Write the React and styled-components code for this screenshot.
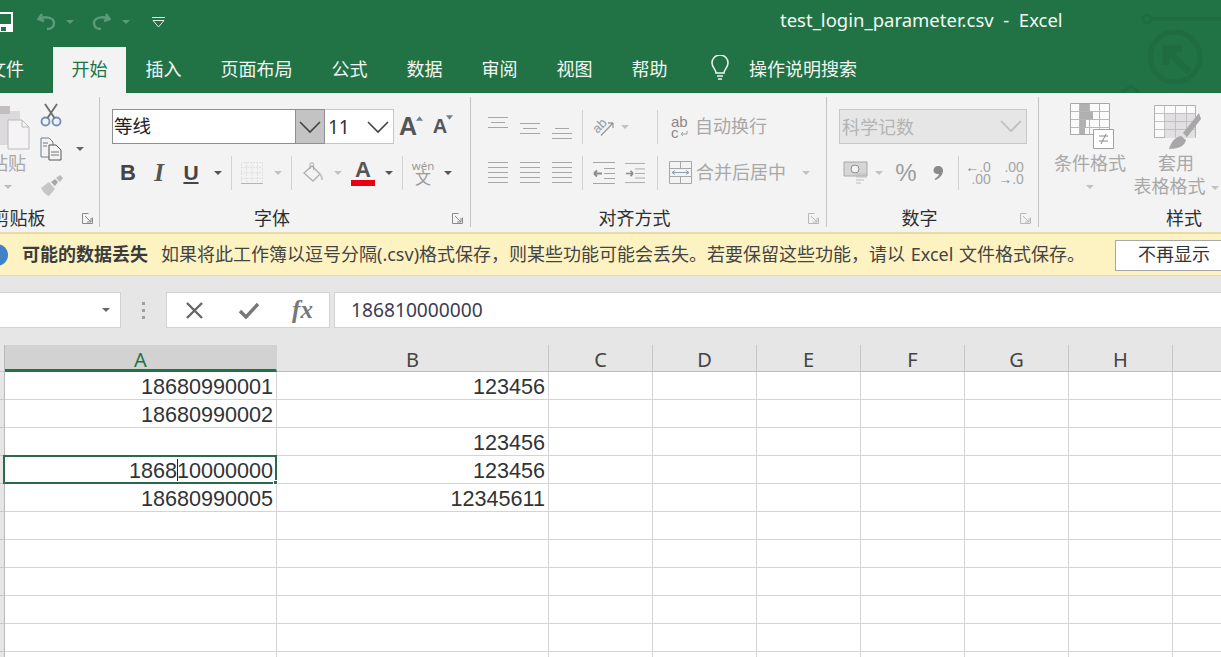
import React from "react";
import styled, { createGlobalStyle } from "styled-components";

const CJK = `"Noto Sans", "Noto Sans CJK SC", sans-serif`;
const Global = createGlobalStyle`
  html, body { margin: 0; padding: 0; overflow: hidden; background: #fff; }
  body { font-family: ${CJK}; }
`;
const Page = styled.div`
  position: relative; width: 1221px; height: 657px; overflow: hidden; display: flex; flex-direction: column;
`;
const TitleBar = styled.div`
  height: 47px; flex: none; background: #217346; display: flex; align-items: center; box-sizing: border-box;
`;
const QuickAccess = styled.div`
  display: flex; align-items: center; width: 164px; flex: none; height: 40px; margin-left: -4px;
`;
const Title = styled.div`
  margin-left: 620px; margin-top: -8px; color: #f4f8f5; font-size: 18.5px; white-space: pre;
`;
const Watermark = styled.svg`
  position: absolute; left: 1120px; top: 0; width: 101px; height: 93px;
`;
const TabBar = styled.div`
  height: 46px; flex: none; background: #217346; display: flex; margin-left: -12px;
`;
const Tab = styled.div`
  padding: 0 ${p => p.$pad ?? 19.5}px 4px; margin-right: ${p => p.$mr ?? 0}px; display: flex; align-items: center;
  font-size: 18px;
  color: ${p => p.$active ? "#217346" : "#f2f6f3"};
  background: ${p => p.$active ? "#f3f3f3" : "transparent"};
`;
const Bulb = styled.svg`
  margin: 0 -3px 0 1px;
`;
const Ribbon = styled.div`
  height: 139px; flex: none; background: #f3f3f3; display: flex; overflow: hidden;
`;
const Group = styled.div`
  position: relative; flex: none; box-sizing: border-box; width: ${p => p.$w}px; margin-left: ${p => p.$ml ?? 0}px;
  display: flex; flex-direction: column;
`;
const GroupBody = styled.div`
  height: 112px; box-sizing: border-box; padding: ${p => p.$pt ?? 16}px 0 0 ${p => p.$pl}px;
  display: flex; flex-direction: ${p => p.$row ? "row" : "column"}; gap: ${p => p.$row ? 0 : 11}px;
`;
const GroupLabel = styled.div`
  height: 27px; line-height: 26px; text-align: center; padding-right: ${p => p.$pr ?? 26}px; font-size: 18px; color: #2e2e2e;
`;
const Launcher = styled.svg`
  position: absolute; right: ${p => p.$r ?? 7}px; bottom: 8px; width: 11px; height: 11px;
`;
const GroupSep = styled.div`
  flex: none; width: 1px; margin: 4px 0 5px; background: #c4c4c4;
`;
const ToolRow = styled.div`
  display: flex; align-items: center; height: 35px;
`;
const Tool = styled.div`
  flex: none; width: ${p => p.$w}px; margin-left: ${p => p.$ml ?? 0}px; display: flex; align-items: center; justify-content: center;
  color: ${p => p.$c ?? "#444"}; height: 35px;
`;
const Caret = styled.span`
  display: inline-block; width: 0; height: 0; border-left: 4px solid transparent; border-right: 4px solid transparent;
  border-top: 4px solid ${p => p.$c ?? "#555"}; flex: none;
`;
const MiniSep = styled.div`
  flex: none; width: 1px; height: ${p => p.$h ?? 34}px; background: #d2d2d2; margin-left: ${p => p.$ml ?? 0}px;
`;
const FontSelect = styled.div`
  width: 183px; height: 35px; box-sizing: border-box; background: #fff; border: 1px solid #8f8f8f; border-right: 0;
  font-size: 18.5px; line-height: 32px; padding-left: 1px; color: #222;
`;
const SelectButton = styled.div`
  width: 30px; height: 35px; box-sizing: border-box; background: #c3c3c3; border: 1px solid #8f8f8f; display: flex; align-items: center; justify-content: center;
`;
const SizeSelect = styled.div`
  width: 69px; height: 35px; box-sizing: border-box; background: #fff; border: 1px solid #c6c6c6; border-left: 0; display: flex;
  align-items: center; justify-content: space-between; padding: 0 3px 0 3px; font-size: 19px; color: #333;
`;
const Glyph = styled.span`
  font-family: ${p => p.$serif ? `"Liberation Serif", serif` : `"Liberation Sans", sans-serif`};
  font-weight: 700; font-size: ${p => p.$s ?? 21}px;
  font-style: ${p => p.$i ? "italic" : "normal"}; color: ${p => p.$c ?? "#444"};
  text-decoration: ${p => p.$u ? "underline" : "none"}; text-underline-offset: 2px;
`;
const SizeMark = styled.svg`
  margin: ${p => p.$top}px 0 0 -1px; flex: none;
`;
const FontColor = styled.div`
  display: flex; flex-direction: column; align-items: center; width: 24px;
  font: 700 22px/22px "Liberation Sans", sans-serif; color: #555;
`;
const RedBar = styled.div`
  width: 24px; height: 6px; background: #e60012; margin-top: -1px;
`;
const Phonetic = styled.div`
  display: flex; flex-direction: column; align-items: center; color: #9a9a9a; font-size: 11.5px; line-height: 11px;
  & b { font-weight: 400; font-size: 16px; line-height: 15px; }
`;
const DimText = styled.div`
  flex: none; font-size: 18px; color: #a8a8a8; margin-left: ${p => p.$ml ?? 0}px; margin-top: -3px; white-space: nowrap;
`;
const NumberSelect = styled.div`
  width: 188px; height: 35px; box-sizing: border-box; background: #e6e6e6; border: 1px solid #c8c8c8; display: flex;
  align-items: center; justify-content: space-between; padding: 0 3px 2px 2px; font-size: 18px; color: #b4b4b4;
`;
const Percent = styled.span`
  font: 400 24px "Liberation Sans", sans-serif; color: #9c9c9c;
`;
const DecimalBox = styled.div`
  display: grid; justify-items: end; font: 400 14px/12px "Liberation Sans", sans-serif; color: #a4a4a4;
  & b { color: #8a8a8a; }
`;
const BigCol = styled.div`
  flex: none; width: ${p => p.$w}px; display: flex; flex-direction: column; align-items: center; color: #a8a8a8; font-size: 18px; line-height: 23px; white-space: nowrap;
`;
const BigIcon = styled.svg`
  height: 47px; width: 50px; margin-bottom: 2px; flex: none;
`;
const CaretLine = styled.div`
  height: 23px; display: flex; align-items: center;
`;
const InlineCaret = styled(Caret)`
  margin-left: 5px; vertical-align: middle;
`;
const PasteCol = styled.div`
  width: 44px; flex: none; display: flex; flex-direction: column; align-items: center; font-size: 18px; color: #a8a8a8; line-height: 23px; white-space: nowrap;
`;
const ClipCol = styled.div`
  margin-left: 10px; display: flex; flex-direction: column; gap: 10px;
`;
const ClipRow = styled.div`
  display: flex; align-items: center; gap: 11px;
`;
const Notice = styled.div`
  height: 44px; flex: none; box-sizing: border-box; background: #fdf3c2; border-top: 2px solid #e6dca8; border-bottom: 1px solid #e6dca8;
  display: flex; align-items: center; font-size: 18px; color: #444; white-space: pre; margin-left: -14px; padding-bottom: 3px; word-spacing: 1px;
`;
const NoticeDot = styled.div`
  width: 22px; height: 22px; border-radius: 50%; background: #3f82c8; flex: none; margin: 3px 14px 0 0;
`;
const NoticeHead = styled.b`
  font-weight: 700; margin-right: 13px; color: #3c3c3c;
`;
const NoticeButton = styled.div`
  position: absolute; left: 1115px; top: 240px; width: 130px; height: 31px; box-sizing: border-box; background: #fff; border: 1px solid #a8a8a8;
  font-size: 18px; line-height: 27px; padding-left: 22px; color: #333;
`;
const FormulaBar = styled.div`
  height: 69px; flex: none; box-sizing: border-box; background: #e6e6e6; padding: 16px 0 17px; display: flex; align-items: stretch;
`;
const NameBox = styled.div`
  width: 121px; box-sizing: border-box; background: #fff; border: 1px solid #d2d2d2; border-left: 0; display: flex; align-items: center; justify-content: flex-end; padding-right: 10px;
`;
const Dots = styled.div`
  width: 45px; display: flex; flex-direction: column; align-items: center; justify-content: center; gap: 4px;
  & i { width: 3px; height: 3px; background: #a0a0a0; display: block; }
`;
const FormulaButtons = styled.div`
  width: 164px; box-sizing: border-box; background: #fff; border: 1px solid #d2d2d2; display: flex; align-items: center;
`;
const FxLabel = styled.span`
  font: italic 700 25px "Liberation Serif", serif; color: #777;
`;
const FormulaInput = styled.div`
  flex: 1; margin-left: 4px; box-sizing: border-box; background: #fff; border: 1px solid #d2d2d2; border-right: 0; padding-left: 16px; font-size: 19.2px; line-height: 33px; color: #3c3c50;
`;
const Sheet = styled.div`
  flex: none; display: grid; grid-template-columns: 5px 272px 272px repeat(6, 104px) 60px; grid-auto-rows: 28px;
  grid-template-rows: 27px; font-family: "Liberation Sans", sans-serif;
`;
const ColHead = styled.div`
  box-sizing: border-box; background: ${p => p.$sel ? "#d2d2d2" : "#e6e6e6"};
  border-right: 1px solid ${p => p.$sel ? "#d2d2d2" : "#c6c6c6"};
  border-bottom: ${p => p.$sel ? "3px solid #217346" : "1px solid #bdbdbd"};
  color: ${p => p.$sel ? "#217346" : "#444"};
  font: 400 20px/29px "Noto Sans", sans-serif; text-align: center;
`;
const RowHead = styled.div`
  box-sizing: border-box; background: #e6e6e6; border-right: 1px solid #b9b9b9; border-bottom: 1px solid #c6c6c6;
`;
const Cell = styled.div`
  position: relative; box-sizing: border-box; background: #fff; border-right: 1px solid #d4d4d4; border-bottom: 1px solid #d4d4d4;
  text-align: right; padding-right: 3px; font-size: 21.6px; line-height: 30px; color: #333;
`;
const SelectedFrame = styled.div`
  position: absolute; z-index: 1; left: -2px; top: -1px; right: -1px; bottom: -1px; border: 2px solid #2a6a4b; pointer-events: none;
`;
const FillHandle = styled.div`
  position: absolute; right: -3px; bottom: -3px; width: 5px; height: 5px; background: #217346; border: 1px solid #fff; box-sizing: border-box;
`;
const TextCaret = styled.span`
  display: inline-block; width: 1px; height: 22px; background: #222; vertical-align: -3px; margin: 0 -1px 0 0;
`;

const Chevron = ({ c = "#444" }) => (
  <svg width="24" height="14" viewBox="0 0 24 14"><path d="M2 2l10 10L22 2" fill="none" stroke={c} strokeWidth="1.6" /></svg>
);
const Lines = ({ ys, x1 = 0, x2 = 20, c = "#a6a6a6", w = 20, h = 24 }) => (
  <svg width={w} height={h} viewBox={`0 0 ${w} ${h}`}>
    {ys.map((y, i) => {
      const [a, b] = Array.isArray(x1) ? x1[i] : [x1, x2];
      return <path key={i} d={`M${a} ${y + 0.5}H${b}`} stroke={c} strokeWidth="1" />;
    })}
  </svg>
);
const IndentIcon = ({ right }) => (
  <svg width="22" height="24" viewBox="0 0 22 24">
    <path d="M0 1.5h22M11 7.5h11M11 12.5h11M11 17.5h11M0 22.5h22" stroke="#a6a6a6" />
    <path d={right ? "M1 12.5h8M9 12.5l-3-3M9 12.5l-3 3" : "M1 12.5h8M1 12.5l3-3M1 12.5l3 3"} stroke="#8c8c8c" strokeWidth="1.8" fill="none" />
  </svg>
);
const LauncherIcon = ({ c = "#8a8a8a", r }) => (
  <Launcher $r={r} viewBox="0 0 11 11"><path d="M.5.5h6M.5.5v10h10v-6M3 3l6 6M9 5v4H5" fill="none" stroke={c} /></Launcher>
);

export default function App() {
  const rows = [
    ["18680990001", "123456"],
    ["18680990002", ""],
    ["", "123456"],
    ["SEL", "123456"],
    ["18680990005", "12345611"],
    ["", ""], ["", ""], ["", ""], ["", ""], ["", ""], ["", ""],
  ];
  return (
    <Page>
      <Global />
      <TitleBar>
        <QuickAccess>
          <svg width="18" height="20" viewBox="0 0 18 20" style={{ marginTop: -4, flex: "none" }}>
            <path d="M1 1h15v18H1z" fill="none" stroke="#fff" strokeWidth="2" />
            <path d="M1 12h15v7H1z" fill="#fff" />
            <path d="M5 15h5v4H5z" fill="#217346" />
          </svg>
          <svg width="20" height="20" viewBox="0 0 20 20" style={{ marginLeft: 23, marginTop: -4, flex: "none" }}>
            <path d="M5 2L1.5 7 7 9M2 7c5-3 15-2 15 4 0 4-3 6-7 6" fill="none" stroke="#5c9a7a" strokeWidth="2.4" />
          </svg>
          <Caret $c="#5c9a7a" style={{ marginLeft: 9, marginTop: -3 }} />
          <svg width="20" height="20" viewBox="0 0 20 20" style={{ marginLeft: 17, marginTop: -4, flex: "none" }}>
            <path d="M15 2l3.5 5L13 9M18 7c-5-3-15-2-15 4 0 4 3 6 7 6" fill="none" stroke="#5c9a7a" strokeWidth="2.4" />
          </svg>
          <Caret $c="#5c9a7a" style={{ marginLeft: 11, marginTop: -3 }} />
          <svg width="13" height="11" viewBox="0 0 13 11" style={{ marginLeft: 22, marginTop: -3, flex: "none" }}>
            <path d="M0 .5h13M1 3.5h11L6.5 10z" fill="none" stroke="#dfeae4" strokeWidth="1" />
          </svg>
        </QuickAccess>
        <Title>{"test_login_parameter.csv  -  Excel"}</Title>
      </TitleBar>
      <Watermark viewBox="0 0 101 93">
        <g fill="none" stroke="#1e6c40" strokeWidth="5">
          <circle cx="55" cy="57" r="25" />
          <path d="M30 19h71" strokeWidth="4" />
          <circle cx="27" cy="19" r="4" strokeWidth="3" />
          <path d="M47 50l22 22M46 65V49h16" strokeWidth="7" />
          <path d="M2 92l9-6 8 6" strokeWidth="3" />
        </g>
      </Watermark>
      <TabBar>
        <Tab $pad={0} $mr={29}>文件</Tab>
        <Tab $active $pad={18.5}>开始</Tab>
        <Tab>插入</Tab>
        <Tab>页面布局</Tab>
        <Tab>公式</Tab>
        <Tab>数据</Tab>
        <Tab>审阅</Tab>
        <Tab>视图</Tab>
        <Tab>帮助</Tab>
        <Tab $pad={22}>
          <Bulb width="20" height="26" viewBox="0 0 20 26">
            <path d="M6 18c0-4-4-5-4-10a8 8 0 0 1 16 0c0 5-4 6-4 10zM7 21h6M8 24h4" fill="none" stroke="#f2f6f3" strokeWidth="1.5" />
          </Bulb>
        </Tab>
        <Tab $pad={0}>操作说明搜索</Tab>
      </TabBar>
      <Ribbon>
        <Group $w={135} $ml={-36}>
          <GroupBody $row $pt={10} $pl={22}>
            <PasteCol>
              <svg width="44" height="47" viewBox="0 0 44 47" style={{ flex: "none", marginBottom: 2 }}>
                <path d="M0 8h34v34H0z" fill="#dcdadc" />
                <path d="M6 3h18v8H6z" fill="#c2bec2" />
                <path d="M22 17h14l7 7v22H22z" fill="#f5f3f5" stroke="#bcbcbc" />
                <path d="M36 17v7h7" fill="none" stroke="#bcbcbc" />
              </svg>
              <span>粘贴</span>
              <CaretLine><Caret $c="#bdbdbd" /></CaretLine>
            </PasteCol>
            <ClipCol>
              <svg width="22" height="24" viewBox="0 0 22 24">
                <circle cx="5.5" cy="18.5" r="4" fill="none" stroke="#6d8fb5" strokeWidth="1.8" />
                <circle cx="16.5" cy="18.5" r="4" fill="none" stroke="#6d8fb5" strokeWidth="1.8" />
                <path d="M7.5 15L17 1M14.5 15L5 1" stroke="#6b6b6b" strokeWidth="1.8" />
              </svg>
              <ClipRow>
                <svg width="22" height="24" viewBox="0 0 22 24">
                  <path d="M1 1h8l4 4v15H1z" fill="#f3f3f3" stroke="#6d7f92" />
                  <path d="M9 8h7l5 5v10H9z" fill="#f3f3f3" stroke="#555" />
                  <path d="M11 15h8M11 18h8M3 6h5M3 9h4" stroke="#777" />
                </svg>
                <Caret $c="#666" style={{ marginLeft: 3 }} />
              </ClipRow>
              <svg width="24" height="22" viewBox="0 0 24 22" style={{ marginTop: 3 }}>
                <path d="M1 14l8-6 6 7-6 7c-3-1-6-4-8-8z" fill="#c6c6c6" />
                <path d="M11 8l4-3 3 3-3 4z" fill="#a8a8a8" />
                <path d="M16 4l4-3 3 3-3 4z" fill="#bababa" />
              </svg>
            </ClipCol>
          </GroupBody>
          <GroupLabel>剪贴板</GroupLabel>
          <LauncherIcon r={6} />
        </Group>
        <GroupSep />
        <Group $w={370}>
          <GroupBody $pl={12}>
            <ToolRow>
              <FontSelect>等线</FontSelect>
              <SelectButton><Chevron /></SelectButton>
              <SizeSelect>11<Chevron /></SizeSelect>
              <Tool $w={34}>
                <Glyph $s={25} $c="#555">A</Glyph>
                <SizeMark $top={-17} width="7" height="5" viewBox="0 0 8 5"><path d="M4 0l4 5H0z" fill="#6f8090" /></SizeMark>
              </Tool>
              <Tool $w={30}>
                <Glyph $s={20} $c="#555">A</Glyph>
                <SizeMark $top={-19} width="7" height="5" viewBox="0 0 8 5"><path d="M0 0h8L4 5z" fill="#6f8090" /></SizeMark>
              </Tool>
            </ToolRow>
            <ToolRow>
              <Tool $w={32}><Glyph $s={22}>B</Glyph></Tool>
              <Tool $w={30}><Glyph $serif $s={25} $i $c="#555">I</Glyph></Tool>
              <Tool $w={34}><Glyph $s={21} $u>U</Glyph></Tool>
              <Tool $w={20}><Caret /></Tool>
              <MiniSep $ml={3} />
              <Tool $w={40}>
                <svg width="22" height="22" viewBox="0 0 22 22">
                  <path d="M.5.5h21v21H.5zM11 .5v21M.5 11h21M5.5.5v21M16.5.5v21M.5 5.5h21M.5 16.5h21" fill="none" stroke="#cfcfcf" strokeDasharray="1 2" />
                  <path d="M0 21.5h22" stroke="#b4b4b4" />
                </svg>
              </Tool>
              <Tool $w={12}><Caret $c="#c2c2c2" /></Tool>
              <MiniSep $ml={7} />
              <Tool $w={42}>
                <svg width="20" height="22" viewBox="0 0 20 22">
                  <path d="M1 11l8-7 8 8-7 7z" fill="#f3f3f3" stroke="#b0b0b0" strokeWidth="1.4" />
                  <path d="M7 7V2.5a1.8 1.8 0 0 1 3.6 0V8" fill="none" stroke="#a8a8a8" />
                  <path d="M17 12c2 2 2.2 4 2 6" fill="none" stroke="#c8c8c8" strokeWidth="2" />
                </svg>
              </Tool>
              <Tool $w={8}><Caret $c="#c2c2c2" /></Tool>
              <Tool $w={42}><FontColor>A<RedBar /></FontColor></Tool>
              <Tool $w={10}><Caret /></Tool>
              <MiniSep $ml={8} />
              <Tool $w={40}><Phonetic>wén<b>文</b></Phonetic></Tool>
              <Tool $w={10}><Caret /></Tool>
            </ToolRow>
          </GroupBody>
          <GroupLabel>字体</GroupLabel>
          <LauncherIcon />
        </Group>
        <GroupSep />
        <Group $w={355}>
          <GroupBody $pl={11}>
            <ToolRow>
              <Tool $w={32}><Lines ys={[2, 7, 12]} x1={[[0, 20], [3, 17], [0, 20]]} /></Tool>
              <Tool $w={32}><Lines ys={[8, 13, 18]} x1={[[0, 20], [3, 17], [0, 20]]} /></Tool>
              <Tool $w={32}><Lines ys={[13, 18, 23]} x1={[[3, 17], [0, 20], [0, 20]]} /></Tool>
              <MiniSep $ml={4} />
              <Tool $w={38}>
                <svg width="24" height="24" viewBox="0 0 24 24">
                  <text x="2" y="15" fontFamily="Liberation Sans" fontSize="13" fill="#9a9a9a" transform="rotate(-45 9.5 10.5)">ab</text>
                  <path d="M11 20.500L23 8M23 8h-5M23 8v5" fill="none" stroke="#9a9a9a" strokeWidth="1.3" />
                </svg>
              </Tool>
              <Tool $w={8}><Caret $c="#c2c2c2" /></Tool>
              <MiniSep $ml={28} />
              <Tool $w={30} $ml={7}>
                <svg width="20" height="24" viewBox="0 0 20 24">
                  <text x="1" y="12" fontFamily="Liberation Sans" fontSize="15" fill="#8a8a8a">ab</text>
                  <text x="1" y="23" fontFamily="Liberation Sans" fontSize="15" fill="#8a8a8a">c</text>
                  <path d="M17 16v3h-6M11 19l2-2M11 19l2 2" fill="none" stroke="#a0a0a0" />
                </svg>
              </Tool>
              <DimText>自动换行</DimText>
            </ToolRow>
            <ToolRow>
              <Tool $w={32}><Lines ys={[1, 6, 11, 16, 21]} /></Tool>
              <Tool $w={32}><Lines ys={[1, 6, 11, 16, 21]} /></Tool>
              <Tool $w={32}><Lines ys={[1, 6, 11, 16, 21]} /></Tool>
              <MiniSep $ml={4} />
              <Tool $w={42}><IndentIcon /></Tool>
              <Tool $w={20}><IndentIcon right /></Tool>
              <MiniSep $ml={12} />
              <Tool $w={30} $ml={7}>
                <svg width="23" height="23" viewBox="0 0 23 23">
                  <path d="M.5.5h22v22H.5zM.5 7.5h22M.5 15.5h22M11.500.5v7M11.500 15.5v7" fill="none" stroke="#a6a6a6" />
                  <path d="M3 11.5h17M3 11.5l3-2M3 11.5l3 2M20 11.5l-3-2M20 11.5l-3 2" fill="none" stroke="#8aa0b5" />
                </svg>
              </Tool>
              <DimText $ml={1}>合并后居中</DimText>
              <Caret $c="#c2c2c2" style={{ marginLeft: 16 }} />
            </ToolRow>
          </GroupBody>
          <GroupLabel $pr={28}>对齐方式</GroupLabel>
          <LauncherIcon c="#b8b8b8" />
        </Group>
        <GroupSep />
        <Group $w={211}>
          <GroupBody $pl={12}>
            <ToolRow>
              <NumberSelect>科学记数<Chevron c="#bdbdbd" /></NumberSelect>
            </ToolRow>
            <ToolRow>
              <Tool $w={32}>
                <svg width="25" height="25" viewBox="0 0 25 25">
                  <path d="M1 2h23v14H1z" fill="#d6d6d6" stroke="#a8a8a8" />
                  <circle cx="12" cy="9" r="4" fill="#f3f3f3" stroke="#8e8e8e" />
                  <path d="M13 14h11M13 17h11M13 20h8M13 23h5" stroke="#bbb" />
                </svg>
              </Tool>
              <Tool $w={16}><Caret $c="#c2c2c2" /></Tool>
              <Tool $w={38}><Percent>%</Percent></Tool>
              <Tool $w={26}>
                <svg width="10" height="14" viewBox="0 0 10 14">
                  <path d="M5 0c3 0 5 2 5 4.500 0 4-3 7.500-7.500 9.500l-1-1c2.500-1.500 4-3 4.500-5-3 .5-5.500-1-5.500-3.500C.5 2 2.500 0 5 0z" fill="#8a8a8a" />
                </svg>
              </Tool>
              <MiniSep $ml={7} />
              <Tool $w={38}><DecimalBox><span><b>←</b>.0</span><span>.00</span></DecimalBox></Tool>
              <Tool $w={28}><DecimalBox><span>.00</span><span><b>→</b>.0</span></DecimalBox></Tool>
            </ToolRow>
          </GroupBody>
          <GroupLabel>数字</GroupLabel>
          <LauncherIcon c="#b8b8b8" />
        </Group>
        <GroupSep />
        <Group $w={316}>
          <GroupBody $row $pt={10} $pl={6}>
            <BigCol $w={90}>
              <BigIcon viewBox="-2 0 50 47">
                <path d="M3.5.5h39v31h-39z" fill="#fbfbfb" stroke="#a8a8a8" />
                <path d="M3.5 8.5h39M3.5 16.5h39M3.500 24.5h39M12.500.5v31M22.500.5v31M32.500.5v31" stroke="#b8b8b8" fill="none" />
                <path d="M13 1h9v7h-9zM13 9h13v7H13zM13 17h6v7h-6zM13 25h5v6h-5z" fill="#b0b0b0" />
                <path d="M26.500 26.500h20v19h-20z" fill="#fff" stroke="#a0a0a0" />
                <path d="M32 33h9M32 38h9M39 31l-5 10" stroke="#8a8a8a" fill="none" />
              </BigIcon>
              <span>条件格式</span>
              <CaretLine><Caret $c="#c2c2c2" /></CaretLine>
            </BigCol>
            <BigCol $w={82}>
              <BigIcon viewBox="0 0 50 47">
                <path d="M3.500 2.500h41v32h-41z" fill="#fbfbfb" stroke="#b0b0b0" />
                <path d="M14 11h30v24H14z" fill="#e2dfe2" />
                <path d="M3.500 10.500h41M3.500 18.500h41M3.500 26.500h41M13.500 2.500v32M24.500 2.500v32M35.500 2.500v32" stroke="#c0c0c0" fill="none" />
                <path d="M48 10L32 30l4 4L50 16z" fill="#a8a8a8" />
                <path d="M18 46c2-7 6-12 12-13l5 4c-1 5-6 9-17 9z" fill="#a8a8a8" />
              </BigIcon>
              <span>套用</span>
              <span>表格格式<InlineCaret $c="#c2c2c2" /></span>
            </BigCol>
          </GroupBody>
          <GroupLabel>样式</GroupLabel>
        </Group>
      </Ribbon>
      <Notice>
        <NoticeDot />
        <NoticeHead>可能的数据丢失</NoticeHead>
        如果将此工作簿以逗号分隔(.csv)格式保存，则某些功能可能会丢失。若要保留这些功能，请以 Excel 文件格式保存。
      </Notice>
      <NoticeButton>不再显示</NoticeButton>
      <FormulaBar>
        <NameBox><Caret $c="#666" /></NameBox>
        <Dots><i /><i /><i /></Dots>
        <FormulaButtons>
          <Tool $w={54}>
            <svg width="19" height="19" viewBox="0 0 19 19"><path d="M2 2l15 15M17 2L2 17" stroke="#666" strokeWidth="2.4" /></svg>
          </Tool>
          <Tool $w={55}>
            <svg width="21" height="17" viewBox="0 0 21 17"><path d="M2 9l6 6L20 2" fill="none" stroke="#777" strokeWidth="3.4" /></svg>
          </Tool>
          <Tool $w={53}><FxLabel>fx</FxLabel></Tool>
        </FormulaButtons>
        <FormulaInput>186810000000</FormulaInput>
      </FormulaBar>
      <Sheet>
        <RowHead />
        <ColHead $sel>A</ColHead>
        {["B", "C", "D", "E", "F", "G", "H", ""].map((h, i) => <ColHead key={i}>{h}</ColHead>)}
        {rows.map((r, i) => (
          <React.Fragment key={i}>
            <RowHead />
            <Cell>
              {r[0] === "SEL" ? (
                <>1868<TextCaret />10000000<SelectedFrame><FillHandle /></SelectedFrame></>
              ) : r[0]}
            </Cell>
            <Cell>{r[1]}</Cell>
            {[0, 1, 2, 3, 4, 5, 6].map(k => <Cell key={k} />)}
          </React.Fragment>
        ))}
      </Sheet>
    </Page>
  );
}
